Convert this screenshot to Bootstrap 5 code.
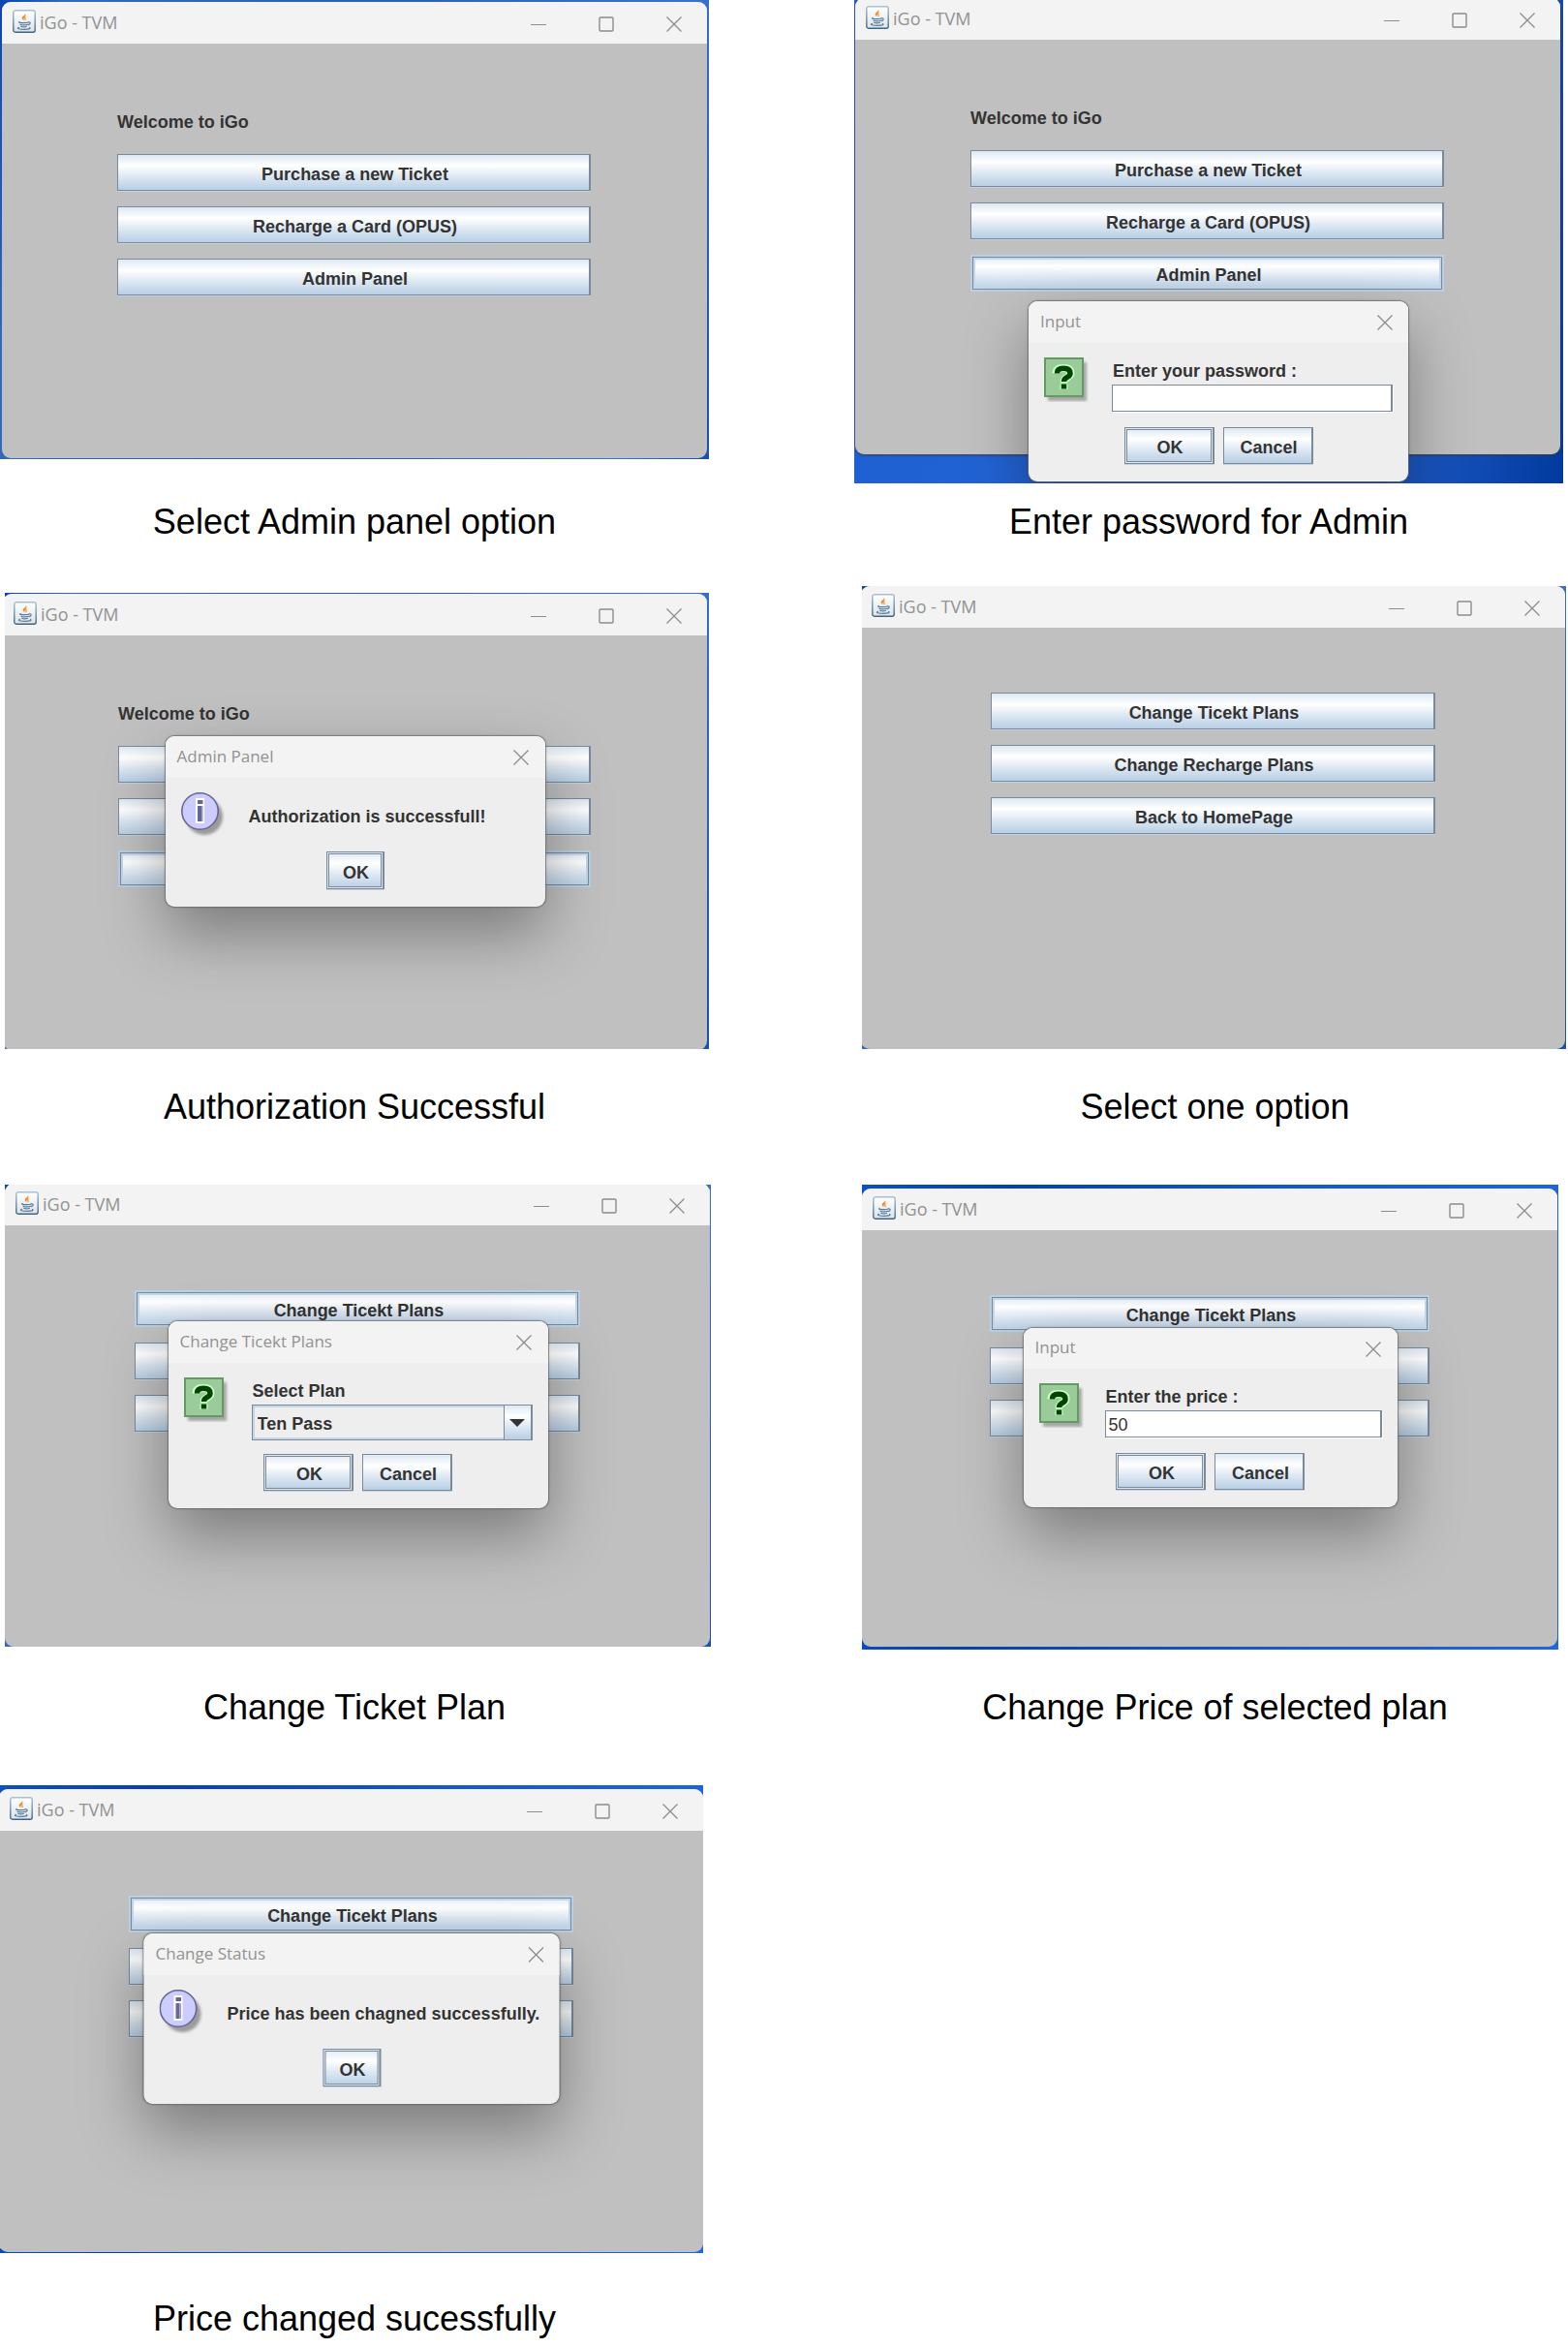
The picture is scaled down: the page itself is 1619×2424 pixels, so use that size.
<!DOCTYPE html>
<html lang="en">
<head>
<meta charset="utf-8">
<meta name="viewport" content="width=device-width, initial-scale=1">
<title>iGo TVM - Admin guide</title>
<link href="https://cdn.jsdelivr.net/npm/bootstrap@5.3.0/dist/css/bootstrap.min.css" rel="stylesheet">
<style>
  body { background: #fff; color: #000; font-family: "Liberation Sans", Arial, sans-serif; }

  /* Guide: two columns of steps */
  .guide { display: grid; grid-template-columns: 732fr 729fr; column-gap: 158px; row-gap: 44px; }
  .step-late { padding-top: 14px; }
  .step-caption { font-size: 36px; line-height: 44px; padding-top: 38px; }
  .step-caption.tight { padding-top: 18px; margin-right: 13px; }
  .step-caption.loose { padding-top: 46px; }

  /* Desktop area behind each window */
  .desk { overflow: hidden; background: linear-gradient(100deg, #0a45b4, #3568b8 8%, #2f5fae 50%, #3a72cf 88%, #1a4fae); }
  .desk-bright { background: linear-gradient(100deg, #1c5fd0, #2766d8 55%, #1d58c4 80%, #003a9e); }
  .desk-top { background: linear-gradient(95deg, #0a50c4, #0540b0 20%, #1458cc 60%, #1c66e0); }
  .desk-1 { padding: 2px 2px 1px; }
  .desk-2 { padding: 0 3px 30px 1px; margin-left: -8px; margin-right: 5px; }
  .desk-3 { padding: 1px 2px 0 0; margin: 7px 0 0 5px; }
  .desk-4 { padding: 0 1px 0 0; margin-right: 2px; }
  .desk-5 { padding: 0 1px 0 0; margin: 0 -2px 0 5px; }
  .desk-6 { padding: 4px 1px 3px 0; margin-right: 10px; }
  .desk-7 { padding: 4px 0 1px; margin-right: 6px; }

  /* Application window */
  .app-window { background: #c0c0c0; border-radius: 9px; overflow: hidden; }
  .desk-2 .app-window { margin-top: -2px; box-shadow: 0 1px 3px rgba(60,60,60,.9); }
  .desk-3 .app-window { margin: 0 0 -1px -2px; }
  .desk-4 .app-window, .desk-7 .app-window { margin-left: -1px; }
  .desk-5 .app-window { margin-top: -1px; }
  .title-bar { height: 43px; padding-bottom: 2px; background: #f3f3f3; color: #929292; font: 17px/24px "Open Sans", "Noto Sans", sans-serif; }
  .app-window > .title-bar { padding-left: 11px; font-size: 18px; }
  .title-bar h2, .title-bar h3 { font: inherit; }
  .title-bar button { width: 68px; height: 41px; border: 0; background: transparent; color: #8c8c8c; }
  .win-controls { gap: 2px; height: 41px; }
  .app-body { padding: 69px 120px 168px 119px; color: #333; font-size: 18px; line-height: 24px; font-weight: 700; }
  .app-body.admin { padding: 67px 134px 222px; }
  .desk-6 .app-body.admin { padding: 67px 132px 217px; }
  .app-body p { margin-bottom: 21px; }

  /* Swing "Metal" controls */
  .metal { height: 38px; padding: 4px 0 0 3px; border: solid #7a8a99; border-width: 1px 2px 1px 1px; border-radius: 0;
    color: #333; font-size: 18px; line-height: 24px; font-weight: 700;
    background: linear-gradient(#dde8f3, #fff 30%, #f8fafc 38%, #dde8f3 62%, #b8cfe5); box-shadow: 0 1px #c2d2e2; }
  .metal:hover, .metal:focus { color: #333; }
  .metal-focus { border: 1px solid #b8cfe5; outline: 1px solid #7a8a99; outline-offset: -3px;
    box-shadow: inset 0 0 0 2px #b8cfe5, inset 0 0 0 4px #c4d7ea; }
  .metal-default { border-width: 1px 2px 1px 1px; box-shadow: inset 0 0 0 1px #dfe8f0, inset 0 0 0 2px #7a8a99, 0 1px #c2d2e2; }

  /* Dialogs float over the window */
  .dialog-box { top: 148px; left: 50%; transform: translateX(-50%); width: 392px; max-width: 100%; color: #333; background: #eee;
    border-radius: 9px; box-shadow: 0 0 0 1px rgba(110,110,110,.65), 0 0 3px rgba(0,0,0,.4), 0 28px 64px rgba(0,0,0,.36); font-size: 18px; line-height: 24px; font-weight: 700; }
  .dialog-box .title-bar { padding-left: 12px; border-radius: 9px 9px 0 0; font-weight: 400; }
  .dialog-box .title-bar button { width: 49px; }
  .dialog-auth { left: calc(50% - 2px); }
  .dialog-password { top: 311px; left: 180px; transform: none; }
  .dialog-plan { top: 141px; }
  .dialog-price { width: 386px; }
  .dialog-price .title-bar { height: 42px; }
  .dialog-status { top: 153px; width: 429px; }
  .dialog-content { padding: 15px 16px 18px; }
  .dialog-row { gap: 24px; }
  .dialog-price .dialog-row { gap: 22px; }
  .dialog-row > svg { flex: 0 0 46px; overflow: visible; }
  .message { min-height: 50px; }
  .field { padding-top: 2px; }
  .field label { margin-bottom: 2px; padding-left: 1px; }
  .swing-input { height: 28px; padding: 3px 3px 0; border: solid #7a8a99; border-width: 1px 2px 1px 1px; border-radius: 0; background: #fff;
    color: #333; font-size: 18px; line-height: 24px; box-shadow: 1px 1px #fff; }
  .swing-select { height: 37px; padding: 2px 34px 0 5px; border: solid #7a8a99; border-width: 1px 2px 1px 1px; border-radius: 0; color: #333;
    font-size: 18px; line-height: 24px; font-weight: 700; appearance: none; background: #eee; box-shadow: inset 0 0 0 2px #c3d5e6; }
  .select-arrow { top: 1px; right: 2px; width: 28px; height: 35px; border-left: 1px solid #7a8a99; pointer-events: none;
    background: linear-gradient(#dde8f3, #fff 30%, #dde8f3 62%, #b8cfe5); }
  .actions { gap: 9px; padding-top: 16px; }
  .dialog-plan .actions { padding-top: 14px; }
  .message-actions { padding-top: 11px; }
  .actions .metal { width: 93px; }
  .message-actions .metal { width: 60px; height: 39px; }

  @media (max-width: 1200px) { .guide { grid-template-columns: minmax(0, 732px); justify-content: center; } }
</style>
<script src="https://cdn.jsdelivr.net/npm/bootstrap@5.3.0/dist/js/bootstrap.bundle.min.js"></script>
</head>
<body>

<svg width="0" height="0" class="position-absolute" aria-hidden="true">
  <defs>
    <linearGradient id="frameFill" x1="0" y1="0" x2="0" y2="1"><stop offset="0" stop-color="#fff"/><stop offset="1" stop-color="#dde3e9"/></linearGradient>
    <linearGradient id="frameEdge" x1="0" y1="0" x2="0" y2="1"><stop offset="0" stop-color="#a9c0d4"/><stop offset="1" stop-color="#3c657f"/></linearGradient>
    <filter id="soft" x="-30%" y="-30%" width="160%" height="160%"><feGaussianBlur stdDeviation="1.4"/></filter>
  </defs>
  <symbol id="java" viewBox="0 0 24 24">
    <rect x=".8" y=".8" width="22.4" height="22.4" rx="2" fill="url(#frameFill)" stroke="url(#frameEdge)" stroke-width="1.4"/>
    <path d="M12.7 3.8c1 2-2.900 3-3 4.800 0 1.500 1.300 2 2 3-.3-1.300-.6-1.800.2-2.800C13 7.300 14.300 6 12.700 3.800zM14.600 7c-1.700.6-2.600 1.400-2.400 2.400.2.800.9 1.200.5 2.400 1-.8 1.300-1.600.8-2.300-.5-.9 0-1.600 1.100-2.500z" fill="#f08a24"/>
    <path d="M7 12.600c-1.500.7 1.500 1 4.600 1 2.200 0 3.600-.2 4.600-.6M8 15.200c1.300.8 5.500.8 7.300 0M8.600 17.300c1.500.6 4.300.6 5.900 0M16 12.900c2.800-.7 2.900 2 .2 2.800M6.500 18.300c-3.200 1.200 1.200 2 5.500 2 3.500 0 7.300-.6 5.500-1.800" fill="none" stroke="#547b9b" stroke-width="1.200" stroke-linecap="round"/>
  </symbol>
  <symbol id="minimize" viewBox="0 0 16 16"><path d="M0 8.500h16" stroke="currentColor"/></symbol>
  <symbol id="maximize" viewBox="0 0 16 16"><rect x="1" y="1" width="14" height="14" rx="1" fill="none" stroke="currentColor" stroke-width="1.400"/></symbol>
  <symbol id="close" viewBox="0 0 16 16"><path d="M.5.5l15 15M15.500.5l-15 15" stroke="currentColor" stroke-width="1.300"/></symbol>
  <symbol id="question" viewBox="0 0 46 46">
    <rect x="4" y="5" width="40" height="40" fill="#000" opacity=".3" filter="url(#soft)"/>
    <rect x="1" y="1" width="39" height="39" fill="#99cc99" stroke="#669966" stroke-width="2"/>
    <g fill="none" stroke-linejoin="round">
      <path d="M12.500 16.500c0-4 3-5.500 7.500-5.500s7.500 1.500 7.500 5.500c0 4.500-7 3.500-7 9M20.500 27.500v5.500" stroke="#ccffcc" stroke-width="8"/>
      <path d="M13.500 16.500c0-4 2.500-5.200 6.500-5.200s7 1.500 7 5.200c0 4.500-6.500 3.500-6.500 8.500M20.500 27.500v5" stroke="#004400" stroke-width="5.500"/>
      <path d="M17 25.800h7" stroke="#ccffcc" stroke-width="1.600"/>
    </g>
  </symbol>
  <symbol id="info" viewBox="0 0 46 46">
    <circle cx="24" cy="25" r="19" fill="#000" opacity=".35" filter="url(#soft)"/>
    <circle cx="19.500" cy="19.500" r="18.700" fill="#ccccff" stroke="#666699" stroke-width="1.600"/>
    <path d="M15 6h9v26h-9z" fill="#fff"/>
    <path d="M17 8h5.500v4H17zM17 14h4v16h-4z" fill="#666699"/><path d="M21 14h1.500v16H21z" fill="#9999cc"/>
  </symbol>
</svg>

<main class="guide">

  <figure class="m-0 d-flex flex-column justify-content-between">
    <div class="desk desk-1 position-relative">
      <section class="app-window">
        <header class="title-bar d-flex align-items-start">
          <svg class="flex-shrink-0 mt-2 me-1" width="24" height="24" aria-hidden="true"><use href="#java"/></svg>
          <h2 class="m-0 me-auto align-self-center">iGo - TVM</h2>
          <div class="win-controls d-flex">
            <button type="button" class="p-0" aria-label="Minimize"><svg width="16" height="16"><use href="#minimize"/></svg></button>
            <button type="button" class="p-0" aria-label="Maximize"><svg width="16" height="16"><use href="#maximize"/></svg></button>
            <button type="button" class="p-0" aria-label="Close"><svg width="16" height="16"><use href="#close"/></svg></button>
          </div>
        </header>
        <div class="app-body">
          <p>Welcome to iGo</p>
          <div class="d-grid gap-3">
            <button type="button" class="btn metal">Purchase a new Ticket</button>
            <button type="button" class="btn metal">Recharge a Card (OPUS)</button>
            <button type="button" class="btn metal">Admin Panel</button>
          </div>
        </div>
      </section>
    </div>
    <figcaption class="step-caption text-center">Select Admin panel option</figcaption>
  </figure>

  <figure class="m-0 d-flex flex-column justify-content-between">
    <div class="desk desk-bright desk-2 position-relative">
      <section class="app-window">
        <header class="title-bar d-flex align-items-start">
          <svg class="flex-shrink-0 mt-2 me-1" width="24" height="24" aria-hidden="true"><use href="#java"/></svg>
          <h2 class="m-0 me-auto align-self-center">iGo - TVM</h2>
          <div class="win-controls d-flex">
            <button type="button" class="p-0" aria-label="Minimize"><svg width="16" height="16"><use href="#minimize"/></svg></button>
            <button type="button" class="p-0" aria-label="Maximize"><svg width="16" height="16"><use href="#maximize"/></svg></button>
            <button type="button" class="p-0" aria-label="Close"><svg width="16" height="16"><use href="#close"/></svg></button>
          </div>
        </header>
        <div class="app-body">
          <p>Welcome to iGo</p>
          <div class="d-grid gap-3">
            <button type="button" class="btn metal">Purchase a new Ticket</button>
            <button type="button" class="btn metal">Recharge a Card (OPUS)</button>
            <button type="button" class="btn metal metal-focus">Admin Panel</button>
          </div>
        </div>
      </section>
      <form class="dialog-box dialog-password position-absolute">
        <header class="title-bar d-flex align-items-start">
          <h3 class="m-0 me-auto align-self-center">Input</h3>
          <button type="button" class="p-0" aria-label="Close"><svg width="16" height="16"><use href="#close"/></svg></button>
        </header>
        <div class="dialog-content">
          <div class="dialog-row d-flex">
            <svg width="46" height="46" aria-hidden="true"><use href="#question"/></svg>
            <div class="field flex-grow-1">
              <label class="d-block" for="password">Enter your password :</label>
              <input class="swing-input d-block w-100" id="password" type="text">
            </div>
          </div>
          <div class="actions d-flex justify-content-center">
            <button type="button" class="btn metal metal-default">OK</button>
            <button type="button" class="btn metal">Cancel</button>
          </div>
        </div>
      </form>
    </div>
    <figcaption class="step-caption tight text-center">Enter password for Admin</figcaption>
  </figure>

  <figure class="m-0 d-flex flex-column justify-content-between">
    <div class="desk desk-3 position-relative">
      <section class="app-window">
        <header class="title-bar d-flex align-items-start">
          <svg class="flex-shrink-0 mt-2 me-1" width="24" height="24" aria-hidden="true"><use href="#java"/></svg>
          <h2 class="m-0 me-auto align-self-center">iGo - TVM</h2>
          <div class="win-controls d-flex">
            <button type="button" class="p-0" aria-label="Minimize"><svg width="16" height="16"><use href="#minimize"/></svg></button>
            <button type="button" class="p-0" aria-label="Maximize"><svg width="16" height="16"><use href="#maximize"/></svg></button>
            <button type="button" class="p-0" aria-label="Close"><svg width="16" height="16"><use href="#close"/></svg></button>
          </div>
        </header>
        <div class="app-body">
          <p>Welcome to iGo</p>
          <div class="d-grid gap-3">
            <button type="button" class="btn metal" aria-label="Purchase a new Ticket"></button>
            <button type="button" class="btn metal" aria-label="Recharge a Card (OPUS)"></button>
            <button type="button" class="btn metal metal-focus" aria-label="Admin Panel"></button>
          </div>
        </div>
      </section>
      <div class="dialog-box dialog-auth position-absolute">
        <header class="title-bar d-flex align-items-start">
          <h3 class="m-0 me-auto align-self-center">Admin Panel</h3>
          <button type="button" class="p-0" aria-label="Close"><svg width="16" height="16"><use href="#close"/></svg></button>
        </header>
        <div class="dialog-content">
          <div class="dialog-row message d-flex align-items-center">
            <svg class="align-self-start" width="46" height="46" aria-hidden="true"><use href="#info"/></svg>
            <span>Authorization is successfull!</span>
          </div>
          <div class="message-actions d-flex justify-content-center">
            <button type="button" class="btn metal metal-default">OK</button>
          </div>
        </div>
      </div>
    </div>
    <figcaption class="step-caption text-center">Authorization Successful</figcaption>
  </figure>

  <figure class="m-0 d-flex flex-column justify-content-between">
    <div class="desk desk-4 position-relative">
      <section class="app-window">
        <header class="title-bar d-flex align-items-start">
          <svg class="flex-shrink-0 mt-2 me-1" width="24" height="24" aria-hidden="true"><use href="#java"/></svg>
          <h2 class="m-0 me-auto align-self-center">iGo - TVM</h2>
          <div class="win-controls d-flex">
            <button type="button" class="p-0" aria-label="Minimize"><svg width="16" height="16"><use href="#minimize"/></svg></button>
            <button type="button" class="p-0" aria-label="Maximize"><svg width="16" height="16"><use href="#maximize"/></svg></button>
            <button type="button" class="p-0" aria-label="Close"><svg width="16" height="16"><use href="#close"/></svg></button>
          </div>
        </header>
        <div class="app-body admin">
          <div class="d-grid gap-3">
            <button type="button" class="btn metal">Change Ticekt Plans</button>
            <button type="button" class="btn metal">Change Recharge Plans</button>
            <button type="button" class="btn metal">Back to HomePage</button>
          </div>
        </div>
      </section>
    </div>
    <figcaption class="step-caption text-center">Select one option</figcaption>
  </figure>

  <figure class="step-late m-0 d-flex flex-column justify-content-between">
    <div class="desk desk-5 position-relative">
      <section class="app-window">
        <header class="title-bar d-flex align-items-start">
          <svg class="flex-shrink-0 mt-2 me-1" width="24" height="24" aria-hidden="true"><use href="#java"/></svg>
          <h2 class="m-0 me-auto align-self-center">iGo - TVM</h2>
          <div class="win-controls d-flex">
            <button type="button" class="p-0" aria-label="Minimize"><svg width="16" height="16"><use href="#minimize"/></svg></button>
            <button type="button" class="p-0" aria-label="Maximize"><svg width="16" height="16"><use href="#maximize"/></svg></button>
            <button type="button" class="p-0" aria-label="Close"><svg width="16" height="16"><use href="#close"/></svg></button>
          </div>
        </header>
        <div class="app-body admin">
          <div class="d-grid gap-3">
            <button type="button" class="btn metal metal-focus">Change Ticekt Plans</button>
            <button type="button" class="btn metal" aria-label="Change Recharge Plans"></button>
            <button type="button" class="btn metal" aria-label="Back to HomePage"></button>
          </div>
        </div>
      </section>
      <form class="dialog-box dialog-plan position-absolute">
        <header class="title-bar d-flex align-items-start">
          <h3 class="m-0 me-auto align-self-center">Change Ticekt Plans</h3>
          <button type="button" class="p-0" aria-label="Close"><svg width="16" height="16"><use href="#close"/></svg></button>
        </header>
        <div class="dialog-content">
          <div class="dialog-row d-flex">
            <svg width="46" height="46" aria-hidden="true"><use href="#question"/></svg>
            <div class="field flex-grow-1">
              <label class="d-block" for="plan">Select Plan</label>
              <div class="position-relative">
                <select class="swing-select d-block w-100" id="plan"><option>Ten Pass</option></select>
                <span class="select-arrow position-absolute d-flex align-items-center justify-content-center" aria-hidden="true">
                  <svg width="16" height="8" viewBox="0 0 16 8"><path d="M0 0h16L8 8z" fill="#333"/></svg>
                </span>
              </div>
            </div>
          </div>
          <div class="actions d-flex justify-content-center">
            <button type="button" class="btn metal metal-default">OK</button>
            <button type="button" class="btn metal">Cancel</button>
          </div>
        </div>
      </form>
    </div>
    <figcaption class="step-caption text-center">Change Ticket Plan</figcaption>
  </figure>

  <figure class="step-late m-0 d-flex flex-column justify-content-between">
    <div class="desk desk-top desk-6 position-relative">
      <section class="app-window">
        <header class="title-bar d-flex align-items-start">
          <svg class="flex-shrink-0 mt-2 me-1" width="24" height="24" aria-hidden="true"><use href="#java"/></svg>
          <h2 class="m-0 me-auto align-self-center">iGo - TVM</h2>
          <div class="win-controls d-flex">
            <button type="button" class="p-0" aria-label="Minimize"><svg width="16" height="16"><use href="#minimize"/></svg></button>
            <button type="button" class="p-0" aria-label="Maximize"><svg width="16" height="16"><use href="#maximize"/></svg></button>
            <button type="button" class="p-0" aria-label="Close"><svg width="16" height="16"><use href="#close"/></svg></button>
          </div>
        </header>
        <div class="app-body admin">
          <div class="d-grid gap-3">
            <button type="button" class="btn metal metal-focus">Change Ticekt Plans</button>
            <button type="button" class="btn metal" aria-label="Change Recharge Plans"></button>
            <button type="button" class="btn metal" aria-label="Back to HomePage"></button>
          </div>
        </div>
      </section>
      <form class="dialog-box dialog-price position-absolute">
        <header class="title-bar d-flex align-items-start">
          <h3 class="m-0 me-auto align-self-center">Input</h3>
          <button type="button" class="p-0" aria-label="Close"><svg width="16" height="16"><use href="#close"/></svg></button>
        </header>
        <div class="dialog-content">
          <div class="dialog-row d-flex">
            <svg width="46" height="46" aria-hidden="true"><use href="#question"/></svg>
            <div class="field flex-grow-1">
              <label class="d-block" for="price">Enter the price :</label>
              <input class="swing-input d-block w-100" id="price" type="text" value="50">
            </div>
          </div>
          <div class="actions d-flex justify-content-center">
            <button type="button" class="btn metal metal-default">OK</button>
            <button type="button" class="btn metal">Cancel</button>
          </div>
        </div>
      </form>
    </div>
    <figcaption class="step-caption text-center">Change Price of selected plan</figcaption>
  </figure>

  <figure class="step-late m-0 d-flex flex-column justify-content-between">
    <div class="desk desk-top desk-7 position-relative">
      <section class="app-window">
        <header class="title-bar d-flex align-items-start">
          <svg class="flex-shrink-0 mt-2 me-1" width="24" height="24" aria-hidden="true"><use href="#java"/></svg>
          <h2 class="m-0 me-auto align-self-center">iGo - TVM</h2>
          <div class="win-controls d-flex">
            <button type="button" class="p-0" aria-label="Minimize"><svg width="16" height="16"><use href="#minimize"/></svg></button>
            <button type="button" class="p-0" aria-label="Maximize"><svg width="16" height="16"><use href="#maximize"/></svg></button>
            <button type="button" class="p-0" aria-label="Close"><svg width="16" height="16"><use href="#close"/></svg></button>
          </div>
        </header>
        <div class="app-body admin">
          <div class="d-grid gap-3">
            <button type="button" class="btn metal metal-focus">Change Ticekt Plans</button>
            <button type="button" class="btn metal" aria-label="Change Recharge Plans"></button>
            <button type="button" class="btn metal" aria-label="Back to HomePage"></button>
          </div>
        </div>
      </section>
      <div class="dialog-box dialog-status position-absolute">
        <header class="title-bar d-flex align-items-start">
          <h3 class="m-0 me-auto align-self-center">Change Status</h3>
          <button type="button" class="p-0" aria-label="Close"><svg width="16" height="16"><use href="#close"/></svg></button>
        </header>
        <div class="dialog-content pe-0">
          <div class="dialog-row message d-flex align-items-center">
            <svg class="align-self-start" width="46" height="46" aria-hidden="true"><use href="#info"/></svg>
            <span>Price has been chagned successfully.</span>
          </div>
          <div class="message-actions d-flex justify-content-center pe-3">
            <button type="button" class="btn metal metal-default">OK</button>
          </div>
        </div>
      </div>
    </div>
    <figcaption class="step-caption loose text-center">Price changed sucessfully</figcaption>
  </figure>

</main>
</body>
</html>
